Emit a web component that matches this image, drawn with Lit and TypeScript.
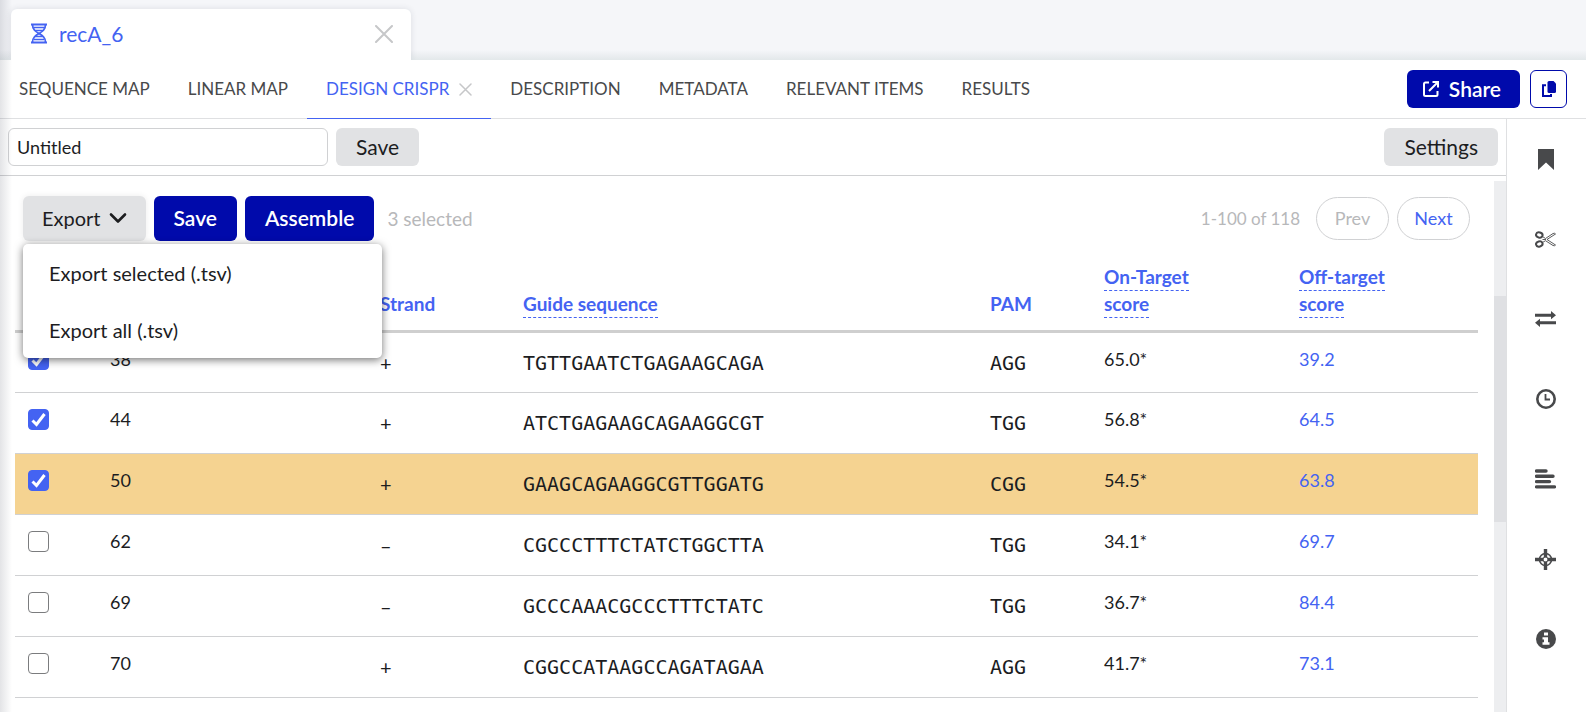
import { LitElement, html, css, svg, nothing } from "lit";
import { customElement, state } from "lit/decorators.js";
import { classMap } from "lit/directives/class-map.js";

interface Guide {
  position: number;
  strand: "+" | "–";
  sequence: string;
  pam: string;
  onTarget: string;
  offTarget: string;
  checked: boolean;
  active?: boolean;
}

const GUIDES: Guide[] = [
  { position: 38, strand: "+", sequence: "TGTTGAATCTGAGAAGCAGA", pam: "AGG", onTarget: "65.0*", offTarget: "39.2", checked: true },
  { position: 44, strand: "+", sequence: "ATCTGAGAAGCAGAAGGCGT", pam: "TGG", onTarget: "56.8*", offTarget: "64.5", checked: true },
  { position: 50, strand: "+", sequence: "GAAGCAGAAGGCGTTGGATG", pam: "CGG", onTarget: "54.5*", offTarget: "63.8", checked: true, active: true },
  { position: 62, strand: "–", sequence: "CGCCCTTTCTATCTGGCTTA", pam: "TGG", onTarget: "34.1*", offTarget: "69.7", checked: false },
  { position: 69, strand: "–", sequence: "GCCCAAACGCCCTTTCTATC", pam: "TGG", onTarget: "36.7*", offTarget: "84.4", checked: false },
  { position: 70, strand: "+", sequence: "CGGCCATAAGCCAGATAGAA", pam: "AGG", onTarget: "41.7*", offTarget: "73.1", checked: false },
];

const VIEWS = ["Sequence Map", "Linear Map", "Design CRISPR", "Description", "Metadata", "Relevant Items", "Results"];

const icon = (w: number, h: number, body: unknown) =>
  html`<svg width=${w} height=${h} viewBox="0 0 ${w} ${h}" aria-hidden="true">${body}</svg>`;

const cross = (size: number, width: number) =>
  icon(size, size, svg`<path d="M1 1L${size - 1} ${size - 1}M${size - 1} 1L1 ${size - 1}" fill="none" stroke="currentColor" stroke-width=${width} stroke-linecap="round"/>`);

const dnaIcon = icon(16, 21, svg`
  <g fill="none" stroke="currentColor">
    <path d="M0 1.5h16M0 19.5h16" stroke-width="2"/>
    <path d="M1.5 1.5C1.5 12 14.5 9 14.5 19.5M14.5 1.5C14.5 12 1.5 9 1.5 19.5" stroke-width="1.8"/>
    <path d="M3 4.500h10M4 7.500h8M4 13.500h8M3 16.500h10" stroke-width="1.300"/>
  </g>`);

const shareIcon = icon(16, 16, svg`
  <g fill="none" stroke="currentColor" stroke-width="2">
    <path d="M6 1.500H2.500Q1 1.500 1 3V13.500Q1 15 2.500 15H13Q14.500 15 14.500 13.500V10"/>
    <path d="M9.500 1H15V6.500M14.500 1.500L6 10"/>
  </g>`);

const copyIcon = icon(14, 16, svg`
  <path d="M7 0h4.500L14 2.500V10.500Q14 12 12.500 12H7Q5.500 12 5.500 10.500V1.500Q5.500 0 7 0Z" fill="currentColor"/>
  <path d="M4 4.200H1V15H9V13" fill="none" stroke="currentColor" stroke-width="2"/>`);

const chevronIcon = icon(18, 12, svg`
  <path d="M2 2.500L9 9.500L16 2.500" fill="none" stroke="currentColor" stroke-width="2.600" stroke-linecap="round" stroke-linejoin="round"/>`);

const SIDE_TOOLS = [
  { label: "Bookmark", glyph: icon(16, 21, svg`<path d="M0 0H16V21L8 13.500L0 21Z" fill="currentColor"/>`) },
  {
    label: "Cut",
    glyph: icon(21, 17, svg`
      <g fill="none" stroke="currentColor">
        <ellipse cx="4.300" cy="4" rx="3.300" ry="2.600" stroke-width="2" transform="rotate(15 4.300 4)"/>
        <ellipse cx="4.300" cy="13" rx="3.300" ry="2.600" stroke-width="2" transform="rotate(-15 4.300 13)"/>
        <path d="M7.500 5.500L10.500 7.500L18 2.500Q20 1.800 20.500 3L12 8.500L20.500 14Q20 15.200 18 14.500L10.500 9.700L7.500 11.500M7.500 8.500H11" stroke-width="0.900"/>
      </g>`),
  },
  {
    label: "Swap",
    glyph: icon(21, 16, svg`
      <path d="M0 2.800H16V0L21 4.200L16 8.200V5.800H0ZM21 10.200H5V7.800L0 11.800L5 16V13.200H21Z" fill="currentColor"/>`),
  },
  {
    label: "History",
    glyph: icon(20, 20, svg`
      <g fill="none" stroke="currentColor"><circle cx="10" cy="10" r="8.700" stroke-width="2.600"/><path d="M9.500 5V10.500H14" stroke-width="1.800"/></g>`),
  },
  {
    label: "Alignments",
    glyph: icon(21, 20, svg`
      <path d="M1.500 2H11M1.500 7.300H18M1.500 12.600H14.500M1.500 17.900H19.500" fill="none" stroke="currentColor" stroke-width="3.400" stroke-linecap="round"/>`),
  },
  {
    label: "Target",
    glyph: icon(21, 21, svg`
      <g fill="none" stroke="currentColor"><circle cx="10.500" cy="10.500" r="6" stroke-width="1.600"/><circle cx="10.500" cy="10.500" r="2.600" stroke-width="1"/>
      <path d="M10.500 0V8.500M10.500 12.500V21M0 10.500H8.500M12.500 10.500H21" stroke-width="3.400"/></g>`),
  },
  {
    label: "Information",
    glyph: icon(20, 20, svg`
      <circle cx="10" cy="10" r="10" fill="currentColor"/>
      <path d="M8 3.500H12V6.500H8ZM6.500 8.200H12V13.200H13.500V15.800H6.500V13.200H8V10.600H6.500Z" fill="#fff"/>`),
  },
];

@customElement("app-root")
export class AppRoot extends LitElement {
  @state() private guides = GUIDES;
  @state() private menuOpen = true;
  @state() private view = "Design CRISPR";

  static styles = css`
    :host {
      --ink: #1c1d1f;
      --muted: #b7b8ba;
      --line: #d0d1d3;
      --accent: #4463f2;
      --primary: #000aab;
      --control: #e1e2e4;
      display: flex;
      flex-direction: column;
      position: relative;
      height: 100vh;
      overflow: hidden;
      background: #fff;
      color: var(--ink);
      font: 18px/24px Lato, "Liberation Sans", sans-serif;
    }
    :host::after {
      content: "";
      position: absolute;
      inset: 0 auto 0 0;
      width: 12px;
      background: linear-gradient(to right, rgba(40, 45, 65, 0.13), rgba(40, 45, 65, 0));
      pointer-events: none;
    }
    * { box-sizing: border-box; }
    svg { display: block; flex: none; }
    button, input { font: inherit; color: inherit; margin: 0; }
    button { cursor: pointer; }
    a { color: var(--accent); text-decoration: none; }

    .files {
      flex: none;
      display: flex;
      padding: 9px 11px 0;
      background: linear-gradient(to top, #e3e8ea, #f5f6f9 10px);
    }
    .file {
      display: flex;
      align-items: center;
      gap: 12px;
      width: 400px;
      height: 51px;
      padding: 0 18px 2px 20px;
      border-radius: 6px 6px 0 0;
      background: #fff;
      box-shadow: 0 0 6px rgba(40, 50, 70, 0.12);
      clip-path: inset(-8px -8px 0 -8px);
      color: var(--accent);
      font-size: 21px;
    }
    .file-name { flex: 1; }
    .bare {
      padding: 0;
      border: 0;
      background: none;
      color: #c6c7c9;
    }

    .nav {
      flex: none;
      display: flex;
      align-items: stretch;
      justify-content: space-between;
      height: 59px;
      padding-right: 19px;
      border-bottom: 1px solid #dfe0e2;
    }
    .views { display: flex; margin-bottom: -1px; font-size: 17px; }
    .view {
      display: flex;
      align-items: center;
      gap: 10px;
      padding: 0 19px;
      border-bottom: 1px solid transparent;
    }
    .view.current { border-color: var(--accent); }
    .view-name {
      padding: 0;
      border: 0;
      background: none;
      color: #48494b;
      text-transform: uppercase;
    }
    .current .view-name { color: var(--accent); }
    .share-group { display: flex; align-items: center; gap: 10px; }

    .btn {
      display: inline-flex;
      align-items: center;
      justify-content: center;
      height: 38px;
      padding: 0 20px;
      border: 0;
      border-radius: 6px;
      background: var(--control);
      font-size: 21px;
      white-space: nowrap;
    }
    .btn.primary { background: var(--primary); color: #fff; font-weight: 600; }
    .btn.tall { height: 45px; padding-bottom: 1px; }
    .btn.share { gap: 10px; padding: 0 19px 0 16px; }
    .btn.square {
      width: 37px;
      padding: 0;
      border: 1px solid var(--primary);
      background: #fff;
      color: var(--primary);
    }
    .btn.export { gap: 8px; padding: 0 19px 1px; font-size: 20px; box-shadow: 0 0 6px rgba(0, 0, 0, 0.08); }

    .body { flex: 1; display: flex; min-height: 0; }
    .main { flex: 1; display: flex; flex-direction: column; min-width: 0; }
    .toolbar {
      flex: none;
      display: flex;
      align-items: center;
      gap: 8px;
      padding: 9px 8px;
      border-bottom: 1px solid var(--line);
    }
    .title {
      width: 320px;
      height: 38px;
      padding: 0 8px;
      border: 1px solid var(--line);
      border-radius: 6px;
      background: #fff;
    }
    .push { margin-left: auto; }

    .pane { flex: 1; display: flex; min-height: 0; }
    .content { flex: 1; min-width: 0; padding: 20px 16px 0 15px; }
    .scrollbar {
      flex: none;
      display: flex;
      flex-direction: column;
      width: 12px;
      margin-top: 5px;
      background: #edeef0;
    }
    .before { flex: 115; }
    .thumb { flex: 226; background: #dfe0e3; }
    .after { flex: 190; }

    .actions { display: flex; align-items: center; gap: 8px; padding: 0 8px; color: var(--muted); }
    .actions .btn { color: var(--ink); }
    .actions .btn.primary { color: #fff; }
    .count { padding-left: 5px; font-size: 19px; }
    .range { margin-left: auto; padding-right: 8px; font-size: 17px; }
    .actions .pill {
      height: 43px;
      width: 73px;
      padding: 0 0 1px;
      border: 1px solid var(--line);
      border-radius: 22px;
      background: #fff;
      color: var(--accent);
      font-size: 18px;
    }
    .actions .pill:disabled { color: var(--muted); }
    .export-wrap { position: relative; display: flex; }
    .menu {
      position: absolute;
      z-index: 1;
      top: 48px;
      left: 0;
      width: 359px;
      border-radius: 5px;
      background: #fff;
      box-shadow: 0 2px 8px rgba(0, 0, 0, 0.55);
    }
    .menu-item {
      display: block;
      width: 100%;
      height: 57px;
      padding: 0 26px;
      border: 0;
      background: none;
      color: var(--ink);
      font-size: 20px;
      text-align: left;
    }

    .guides { width: 100%; margin-top: 22px; border-collapse: collapse; table-layout: fixed; }
    .guides th {
      padding: 0 12px 13px;
      border-bottom: 3px solid #cfcfcf;
      color: var(--accent);
      font-size: 19px;
      font-weight: 700;
      line-height: 27px;
      text-align: left;
      vertical-align: bottom;
    }
    .hint { padding-bottom: 2px; border-bottom: 1px dashed var(--accent); }
    .guides td {
      height: 61px;
      padding: 14px 12px 0;
      border-bottom: 1px solid var(--line);
      vertical-align: top;
    }
    .guides .strand, .guides .mono {
      padding-top: 18px;
      font-size: 20px;
    }
    .guides .mono { font-family: "DejaVu Sans Mono", monospace; }
    .guides .active { background: #f5d391; }
    .col-check { width: 83px; }
    .col-pos { width: 270px; }
    .col-strand { width: 143px; }
    .col-pam { width: 114px; }
    .col-on { width: 195px; }
    .col-off { width: 191px; }
    .tick {
      display: block;
      appearance: none;
      width: 21px;
      height: 21px;
      margin: 2px 0 0 1px;
      border: 1px solid #7b7c7e;
      border-radius: 4px;
      background: #fff;
    }
    .tick:checked {
      border-color: var(--accent);
      background: var(--accent) url("data:image/svg+xml,%3Csvg xmlns='http://www.w3.org/2000/svg' viewBox='0 0 19 19'%3E%3Cpath d='M3.500 10.500L7.500 14.500L15.500 4' fill='none' stroke='white' stroke-width='3'/%3E%3C/svg%3E");
    }

    .side {
      flex: none;
      display: flex;
      flex-direction: column;
      width: 80px;
      border-left: 1px solid #dfe0e2;
    }
    .tool {
      display: flex;
      align-items: center;
      justify-content: center;
      height: 80px;
      padding: 0 2px 0 0;
      border: 0;
      background: none;
      color: #48494b;
    }
  `;

  private toggle(position: number) {
    this.guides = this.guides.map((g) => (g.position === position ? { ...g, checked: !g.checked } : g));
  }

  private renderRow(g: Guide) {
    return html`<tr class=${classMap({ active: !!g.active })}>
      <td><input class="tick" type="checkbox" aria-label="Select guide at ${g.position}" .checked=${g.checked} @change=${() => this.toggle(g.position)}></td>
      <td>${g.position}</td>
      <td class="strand">${g.strand}</td>
      <td class="mono">${g.sequence}</td>
      <td class="mono">${g.pam}</td>
      <td>${g.onTarget}</td>
      <td><a href="#off-target-${g.position}">${g.offTarget}</a></td>
    </tr>`;
  }

  render() {
    const selected = this.guides.filter((g) => g.checked).length;
    return html`
      <div class="files">
        <div class="file">
          ${dnaIcon}<span class="file-name">recA_6</span>
          <button class="bare" aria-label="Close recA_6">${cross(18, 2)}</button>
        </div>
      </div>

      <nav class="nav">
        <div class="views">
          ${VIEWS.map((name) => html`
            <div class=${classMap({ view: true, current: name === this.view })}>
              <button class="view-name" @click=${() => (this.view = name)}>${name}</button>
              ${name === "Design CRISPR" ? html`<button class="bare" aria-label="Close Design CRISPR">${cross(13, 1.5)}</button>` : nothing}
            </div>`)}
        </div>
        <div class="share-group">
          <button class="btn primary share">${shareIcon}Share</button>
          <button class="btn square" aria-label="Copy">${copyIcon}</button>
        </div>
      </nav>

      <div class="body">
        <main class="main">
          <div class="toolbar">
            <input class="title" type="text" aria-label="Design name" value="Untitled">
            <button class="btn">Save</button>
            <button class="btn push">Settings</button>
          </div>
          <div class="pane">
            <div class="content">
              <div class="actions">
                <div class="export-wrap">
                  <button class="btn tall export" aria-expanded=${this.menuOpen} @click=${() => (this.menuOpen = !this.menuOpen)}>Export${chevronIcon}</button>
                  ${this.menuOpen ? html`<div class="menu">
                    <button class="menu-item">Export selected (.tsv)</button>
                    <button class="menu-item">Export all (.tsv)</button>
                  </div>` : nothing}
                </div>
                <button class="btn primary tall">Save</button>
                <button class="btn primary tall">Assemble</button>
                <span class="count">${selected} selected</span>
                <span class="range">1-100 of 118</span>
                <button class="btn pill" disabled>Prev</button>
                <button class="btn pill">Next</button>
              </div>
              <table class="guides">
                <colgroup>
                  <col class="col-check"><col class="col-pos"><col class="col-strand"><col>
                  <col class="col-pam"><col class="col-on"><col class="col-off">
                </colgroup>
                <thead>
                  <tr>
                    <th></th>
                    <th></th>
                    <th>Strand</th>
                    <th><span class="hint">Guide sequence</span></th>
                    <th>PAM</th>
                    <th><span class="hint">On-Target<br>score</span></th>
                    <th><span class="hint">Off-target<br>score</span></th>
                  </tr>
                </thead>
                <tbody>${this.guides.map((g) => this.renderRow(g))}</tbody>
              </table>
            </div>
            <div class="scrollbar"><div class="before"></div><div class="thumb"></div><div class="after"></div></div>
          </div>
        </main>
        <aside class="side">
          ${SIDE_TOOLS.map((t) => html`<button class="tool" aria-label=${t.label}>${t.glyph}</button>`)}
        </aside>
      </div>
    `;
  }
}
